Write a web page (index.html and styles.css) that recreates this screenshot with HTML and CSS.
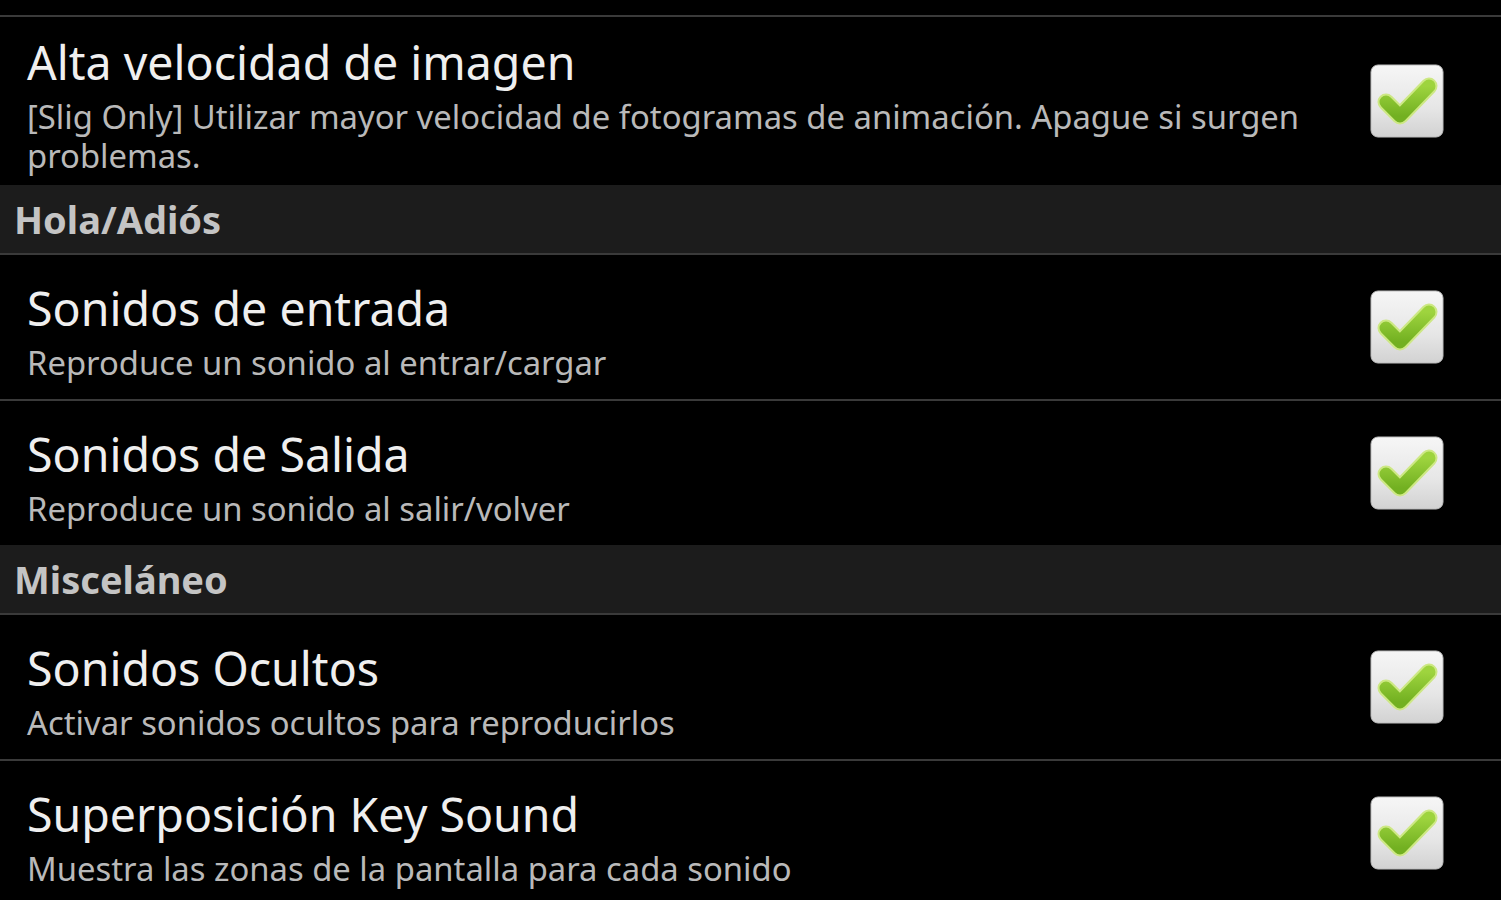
FILE: index.html
```html
<!DOCTYPE html>
<html lang="es">
<head>
    <meta charset="UTF-8">
    <meta name="viewport" content="width=device-width, initial-scale=1.0">
    <title>Ajustes</title>
    <link rel="stylesheet" href="styles.css">
</head>
<body>
    <svg width="0" height="0" class="defs">
        <defs>
            <linearGradient id="boxFill" x1="0" y1="0" x2="0" y2="1">
                <stop offset="0" stop-color="#f6f6f6"/>
                <stop offset="0.6" stop-color="#e6e6e6"/>
                <stop offset="1" stop-color="#d2d2d2"/>
            </linearGradient>
            <linearGradient id="checkFill" x1="0" y1="0" x2="0" y2="1">
                <stop offset="0" stop-color="#9ed43e"/>
                <stop offset="1" stop-color="#72b021"/>
            </linearGradient>
            <symbol id="checkbox" viewBox="0 0 74 74">
                <rect x="1" y="1" width="72" height="72" rx="7" fill="url(#boxFill)" stroke="#bdbdbd" stroke-width="1"/>
                <path d="M16 38 L30 52 L59 22" fill="none" stroke="#cde884" stroke-width="17" stroke-linecap="round" stroke-linejoin="round"/>
                <path d="M16 38 L30 52 L59 22" fill="none" stroke="url(#checkFill)" stroke-width="13" stroke-linecap="round" stroke-linejoin="round"/>
            </symbol>
        </defs>
    </svg>

    <div class="settings-list">
        <div class="top-gap"></div>
        <div class="divider"></div>

        <div class="pref tall">
            <div class="pref-text">
                <div class="pref-title">Alta velocidad de imagen</div>
                <div class="pref-summary">[Slig Only] Utilizar mayor velocidad de fotogramas de animación. Apague si surgen problemas.</div>
            </div>
            <svg class="check"><use href="#checkbox"/></svg>
        </div>

        <div class="category">Hola/Adiós</div>
        <div class="divider"></div>

        <div class="pref">
            <div class="pref-text">
                <div class="pref-title">Sonidos de entrada</div>
                <div class="pref-summary">Reproduce un sonido al entrar/cargar</div>
            </div>
            <svg class="check"><use href="#checkbox"/></svg>
        </div>
        <div class="divider"></div>

        <div class="pref">
            <div class="pref-text">
                <div class="pref-title">Sonidos de Salida</div>
                <div class="pref-summary">Reproduce un sonido al salir/volver</div>
            </div>
            <svg class="check"><use href="#checkbox"/></svg>
        </div>

        <div class="category">Misceláneo</div>
        <div class="divider"></div>

        <div class="pref">
            <div class="pref-text">
                <div class="pref-title">Sonidos Ocultos</div>
                <div class="pref-summary">Activar sonidos ocultos para reproducirlos</div>
            </div>
            <svg class="check"><use href="#checkbox"/></svg>
        </div>
        <div class="divider"></div>

        <div class="pref">
            <div class="pref-text">
                <div class="pref-title">Superposición Key Sound</div>
                <div class="pref-summary">Muestra las zonas de la pantalla para cada sonido</div>
            </div>
            <svg class="check"><use href="#checkbox"/></svg>
        </div>
    </div>
</body>
</html>
```

FILE: styles.css
```css
* {
    margin: 0;
    padding: 0;
    box-sizing: border-box;
}

html, body {
    background: #000;
    height: 100%;
    overflow: hidden;
}

body {
    font-family: "Noto Sans", "Open Sans", sans-serif;
    color: #eeeeee;
}

.defs {
    position: absolute;
}

.settings-list {
    display: flex;
    flex-direction: column;
}

.top-gap {
    height: 15px;
}

.divider {
    height: 2px;
    background: #3a3a3a;
}

.pref {
    display: flex;
    align-items: center;
    height: 144px;
    padding: 27px 57px 17px 27px;
    gap: 40px;
}

.pref.tall {
    height: 168px;
    padding-top: 19px;
    padding-bottom: 8px;
}

.pref-text {
    flex: 1;
    align-self: flex-start;
}

.pref-title {
    font-size: 46.5px;
    line-height: 52px;
    margin-bottom: 9px;
    color: #efefef;
}

.pref-summary {
    font-size: 32.8px;
    line-height: 39px;
    color: #b9b9b9;
}

.check {
    width: 74px;
    height: 74px;
    flex-shrink: 0;
    align-self: center;
    margin-top: -10px;
}

.pref.tall .check {
    margin-top: -11px;
}

.category {
    background: #1c1c1c;
    height: 68px;
    padding-left: 14px;
    display: flex;
    align-items: center;
    font-size: 38px;
    font-weight: bold;
    color: #c4c4c4;
}
```
